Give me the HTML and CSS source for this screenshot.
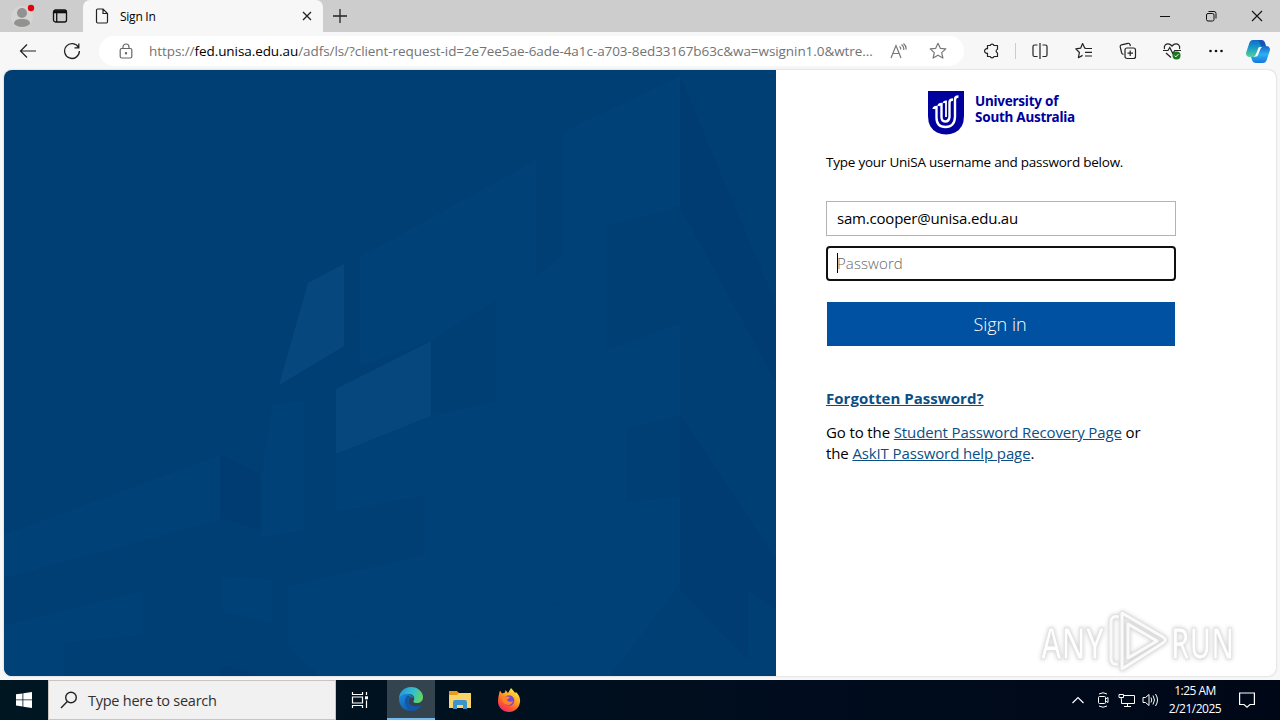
FILE: index.html
```html
<!DOCTYPE html>
<html lang="en">
<head>
  <meta charset="UTF-8">
  <title>Sign In</title>
  <link rel="stylesheet" href="styles.css">
</head>
<body>
  <div class="tabstrip">
    <svg class="profile" width="24" height="26" viewBox="0 0 24 26"><circle cx="11" cy="14" r="11" fill="#d6d4d2"/><circle cx="11" cy="10" r="5" fill="#929292"/><path d="M3 21c0-4 3-5 8-5s8 1 8 5c-2 2-5 3-8 3s-6-1-8-3z" fill="#929292"/><circle cx="20" cy="5" r="3.2" fill="#e3000f"/></svg>
    <svg class="tab-actions" width="16" height="16" viewBox="0 0 16 16" fill="none" stroke="#111" stroke-width="1.3"><rect x="1.5" y="2" width="13" height="12" rx="2"/><path d="M2 3.8h12" stroke-width="3"/><path d="M4.7 5v9"/></svg>
    <div class="tab">
      <svg width="14" height="16" viewBox="0 0 14 16" fill="none" stroke="#222" stroke-width="1.2"><path d="M1.5 2.2Q1.5 1 2.7 1H8l4.500 4.500v8.300q0 1.200-1.200 1.200H2.700q-1.200 0-1.200-1.200zM8 1v4.500h4.500"/></svg>
      <span class="tab-title">Sign In</span>
      <svg class="tab-close" width="10" height="10" viewBox="0 0 10 10" stroke="#222" stroke-width="1.3"><path d="M1 1l8 8M9 1L1 9"/></svg>
    </div>
    <svg class="new-tab" width="14" height="14" viewBox="0 0 14 14" stroke="#222" stroke-width="1.3"><path d="M7 0v14M0 7h14"/></svg>
    <div class="window-buttons">
      <svg width="12" height="12" viewBox="0 0 12 12" stroke="#111"><path d="M1 6.500h10"/></svg>
      <svg width="12" height="12" viewBox="0 0 12 12" fill="none" stroke="#111"><rect x="1.500" y="3.500" width="7.500" height="7.500" rx="1.500"/><path d="M3.500 1.500H9q2 0 2 2v5"/></svg>
      <svg width="12" height="12" viewBox="0 0 12 12" stroke="#111" stroke-width="1.100"><path d="M1 1l10 10M11 1L1 11"/></svg>
    </div>
  </div>

  <div class="toolbar">
    <svg class="back" width="18" height="16" viewBox="0 0 18 16" fill="none" stroke="#222" stroke-width="1.200"><path d="M17 8H1.500M8 1.500L1.500 8 8 14.500"/></svg>
    <svg class="reload" width="18" height="18" viewBox="0 0 18 18" fill="none" stroke="#222" stroke-width="1.300"><path d="M15.500 5.500A7.400 7.400 0 1 0 16.400 9M15.800 1.500v4.300h-4.300"/></svg>
    <div class="address">
      <svg width="14" height="16" viewBox="0 0 14 16" fill="none" stroke="#666" stroke-width="1.200"><rect x="1.200" y="5.500" width="11.600" height="9.500" rx="1.500"/><path d="M4 5.500V4a3 3 0 0 1 6 0v1.500"/><circle cx="7" cy="10.200" r=".6" fill="#666"/></svg>
      <span class="url">https://<b>fed.unisa.edu.au</b>/adfs/ls/?client-request-id=2e7ee5ae-6ade-4a1c-a703-8ed33167b63c&amp;wa=wsignin1.0&amp;wtre...</span>
      <svg class="read" width="17" height="16" viewBox="0 0 17 16" fill="none" stroke="#777" stroke-width="1.200"><path d="M1 15L6 2.500 11 15M2.800 10.500h6.400M9.500 3.500q1.500 1 1.200 3M11.500 1.500q2.800 2 2.200 5.500M13.500.5q3 2.500 2.500 6"/></svg>
      <svg class="fav" width="18" height="18" viewBox="0 0 18 18" fill="none" stroke="#777" stroke-width="1.200" stroke-linejoin="round"><path d="M9 1.300l2.300 5 5.500.6-4.100 3.700 1.200 5.500L9 13.300l-4.900 2.800 1.200-5.500L1.200 6.900l5.500-.6z"/></svg>
    </div>
    <svg class="ext" width="18" height="18" viewBox="0 0 18 18" fill="none" stroke="#222" stroke-width="1.200" stroke-linejoin="round"><path d="M4.500 3.500h2.700a2 2 0 0 1 3.800 0h3.500v3.700a2 2 0 0 0 0 3.800v3.500H11a2 2 0 0 1-3.800 0H4.500v-3.300a2.300 2.300 0 1 1 0-4.400z"/></svg>
    <span class="separator"></span>
    <svg class="split" width="18" height="18" viewBox="0 0 18 18" fill="none" stroke="#222" stroke-width="1.200"><path d="M9 1v16M6.500 3h-3Q2 3 2 4.500v8.500q0 1.500 1.500 1.500h3M11.500 3h3Q16 3 16 4.500v8.500q0 1.500-1.500 1.500h-3"/></svg>
    <svg width="18" height="18" viewBox="0 0 18 18" fill="none" stroke="#222" stroke-width="1.200" stroke-linejoin="round"><path d="M11 6.300l-1.200-.1L7.600 1.500l-2 4.700-4.800.7 3.600 3.600-1 5.200 4.200-2.300M11 6.500h6M10 10.300h7M10 14h7"/></svg>
    <svg width="18" height="18" viewBox="0 0 18 18" fill="none" stroke="#222" stroke-width="1.200"><rect x="6" y="6" width="10.500" height="10.500" rx="2"/><path d="M11.200 8.500v5.500M8.500 11.200H14M4.500 12.500Q3 12 2.700 11L1.200 4.800q-.3-1.500 1.200-2L9 1.300q1.500-.3 2 1.200l.4 1.500"/></svg>
    <svg width="18" height="18" viewBox="0 0 18 18" fill="none" stroke="#222" stroke-width="1.200"><path d="M1.500 7C.5 3.500 3 1.800 5 1.800c2 0 3 1 4 2.200 1-1.200 2-2.200 4-2.200s4.500 1.700 3.500 5.200M0 8.500h5l1.800-3 3 6 2-3H18M3 11l5 4.500"/><circle cx="13.500" cy="13.500" r="4" fill="#16791c" stroke="none"/><path d="M11.500 13.600l1.300 1.300 2.700-2.800" stroke="#fff" stroke-width="1"/></svg>
    <svg width="18" height="18" viewBox="0 0 18 18" fill="#111"><circle cx="3.500" cy="9" r="1.300"/><circle cx="9" cy="9" r="1.300"/><circle cx="14.500" cy="9" r="1.300"/></svg>
    <svg class="copilot" width="24" height="23" viewBox="0 0 24 23">
      <defs>
        <linearGradient id="cpA" x1="0" y1="0" x2="0" y2="1"><stop offset="0" stop-color="#1269cf"/><stop offset=".45" stop-color="#179bc5"/><stop offset="1" stop-color="#53d19c"/></linearGradient>
        <linearGradient id="cpB" x1="0" y1="0" x2="0" y2="1"><stop offset="0" stop-color="#1b5fd0"/><stop offset=".5" stop-color="#2bb1f3"/><stop offset="1" stop-color="#1577de"/></linearGradient>
      </defs>
      <path d="M18 6h2q4 0 4 4l-3 9q-1 4-4 4h-7q-3 0-4-3l-1-3h3q2 0 3-3l2-5q1-3 5-3z" fill="url(#cpB)"/>
      <path d="M7 0h8q3 0 4 3l1 4h-4q-2 0-3 3l-2 5q-1 2-4 2H4q-4 0-4-4l3-9Q4 0 7 0z" fill="url(#cpA)"/>
      <path d="M13.500 7H16q-1.500 1-2 3l-2 5q-.6 1.500-2 1.500H8q1.500-1 2-2.500l2-5q.5-2 1.500-2z" fill="#fff"/>
      <path d="M15 0q3 0 4 3l1 3.500h-4q-1.500-.5-2-3Q13.500 1 12 0z" fill="#1b50b8"/>
    </svg>
  </div>

  <div class="page">
    <svg class="illustration" width="772" height="606" viewBox="4 0 772 606">
      <rect x="4" width="772" height="606" fill="#003f74"/>
      <path fill="#004178" d="M360 187L536 90V206L563 185V62L680 6V136L607 156V280L680 253V345L627 358V432L680 427V514L288 577V516L425 485V425L336 442V384L431 346 496 331V230L431 271 360 296z"/>
      <path fill="#004178" d="M4 465L220 385V450L4 508zM4 555L143 521V565L64 573V606H4zM272 335L304 330V460L262 468V405zM223 506L272 510V553L223 542zM288 577L680 514 610 606H320z"/>
      <path fill="#003c71" d="M680 6L776 235V312L680 137zM680 345L776 490V540L748 520V590L680 520zM220 384L260 404V460L220 448zM220 595L262 606H220z"/>
      <path fill="#06487e" d="M308 213L344 194V276L279 315zM336 319L431 271V346L336 384z"/>
    </svg>
    <div class="login">
      <div class="logo">
        <svg width="36" height="44" viewBox="0 0 36 44"><path d="M0 0h36v25q0 12-9 16.500-9 4-18 0Q0 37 0 25z" fill="#00009c"/><g fill="none" stroke="#fff" stroke-width="2.400"><path d="M5.500 18q.5-2 3-2v10.500q0 9.500 9 9.500t9.500-10V8.500Q27 5.500 30.500 5.500"/><path d="M10.500 15q.5-2 3-2v13q0 4.500 3.700 4.500t4.300-4.500V11.500q0-3 3.500-3"/><path d="M15.500 12q.5-1.500 2.500-1.500V26" stroke-width="1.800"/></g></svg>
        <div class="logo-text"><div>University of</div><div>South Australia</div></div>
      </div>
      <p class="intro">Type your UniSA username and password below.</p>
      <form>
        <input class="field" type="text" value="sam.cooper@unisa.edu.au">
        <div class="field focused"><span class="caret"></span><span class="placeholder">Password</span></div>
        <button class="submit" type="button">Sign in</button>
      </form>
      <a class="forgot" href="#">Forgotten Password?</a>
      <p class="help">Go to the <a href="#">Student Password Recovery Page</a> or<br>the <a href="#">AskIT Password help page</a>.</p>
    </div>
    <svg class="watermark" width="206" height="66" viewBox="0 0 206 66">
      <g fill="#fff" stroke="#e2e2e2" stroke-width="1">
        <text x="3" y="51" textLength="63" lengthAdjust="spacingAndGlyphs">ANY</text>
        <text x="133" y="51" textLength="63" lengthAdjust="spacingAndGlyphs">RUN</text>
      </g>
      <g fill="none" stroke-linejoin="round">
        <path d="M81 9q-8-2-8 5v37q0 6 7 5M84 5l41 24q5 3 0 6L84 61V5zM90 16v34l29-17z" stroke="#dedede" stroke-width="4.500"/>
        <path d="M81 9q-8-2-8 5v37q0 6 7 5M84 5l41 24q5 3 0 6L84 61V5zM90 16v34l29-17z" stroke="#fafafa" stroke-width="3"/>
      </g>
    </svg>
  </div>

  <div class="taskbar">
    <div class="start"><svg width="16" height="16" viewBox="0 0 16 16" fill="#fff"><path d="M0 2.300l6.500-.9v6.100H0zM7.300 1.300L16 0v7.500H7.300zM0 8.300h6.500v6.100L0 13.500zM7.300 8.300H16V16l-8.700-1.300z"/></svg></div>
    <div class="search">
      <svg width="18" height="18" viewBox="0 0 18 18" fill="none" stroke="#222" stroke-width="1.400"><circle cx="11" cy="6.500" r="5.300"/><path d="M7.300 10.500L1 17"/></svg>
      <span>Type here to search</span>
    </div>
    <div class="task"><svg width="18" height="16" viewBox="0 0 18 16" fill="none" stroke="#fff" stroke-width="1.200"><path d="M1.500 0v2.500h10V0M1.500 16v-2.500h10V16M1.500 5h10v6h-10zM15.500 0v3M15.500 8.500V16"/><path d="M14 4.300h3v3h-3z" fill="#fff" stroke="none"/></svg></div>
    <div class="task active">
      <svg width="24" height="24" viewBox="0 0 24 24">
        <defs>
          <linearGradient id="edgeTop" x1="0" y1=".3" x2="1" y2=".6"><stop offset="0" stop-color="#2497dc"/><stop offset=".55" stop-color="#35c0cc"/><stop offset="1" stop-color="#65d65c"/></linearGradient>
          <linearGradient id="edgeLow" x1="0" y1="0" x2="1" y2="1"><stop offset="0" stop-color="#1b8de0"/><stop offset="1" stop-color="#0d4a94"/></linearGradient>
        </defs>
        <path d="M0 12C0 5 5 0 12 0s12 5 12 10c0 4-3 6-6 6-4 0-4-1.500-3-3 1-3-1-6-5-6C5 7 1 9 0 12z" fill="url(#edgeTop)"/>
        <path d="M0 12c1-4 5-5.500 9-5 3 .3 5 2 5.500 4-2-1.500-5 0-5 3.500 0 4 4 6.500 8 5.500 2-.4 4-1.500 5-2.300C20 22 16 24 12 24 5 24 0 19 0 12z" fill="url(#edgeLow)"/>
        <path d="M8 9c-4 4-2 12 4 15 4 0 8-2 10.500-6.300-5 3.300-12 1.300-13-3.200C9 12 10.500 11 12 10.500 11 9 9.500 8.500 8 9z" fill="#1556a5"/>
      </svg>
    </div>
    <div class="task"><svg width="22" height="20" viewBox="0 0 22 20"><path d="M0 1h8l2 2h11v5H0z" fill="#e89c1b"/><path d="M0 5h8l2-2h12v15H0z" fill="#fbd468"/><path d="M4 19v-7q0-2 2-2h10q2 0 2 2v7h-4v-4H8v4z" fill="#3c93d0"/></svg></div>
    <div class="task">
      <svg width="24" height="24" viewBox="0 0 24 24">
        <defs><linearGradient id="fox" x1=".8" y1="0" x2=".2" y2="1"><stop offset="0" stop-color="#fff44f"/><stop offset=".4" stop-color="#ffa51e"/><stop offset=".7" stop-color="#ff5735"/><stop offset="1" stop-color="#f0206a"/></linearGradient></defs>
        <path d="M3 2.500l2 3 3-1 .5-2.500L11 5l3-5c2 2 3 3.500 4 5l1-1c3 3 4.500 6 4 10-.6 5.500-5 10-11 10S1 19.500 1 13.500C1 9 2 6 3 2.500z" fill="url(#fox)"/>
        <circle cx="12" cy="12.500" r="5.300" fill="#7a45d8"/><path d="M5 9c3-2 5 0 8 0-1 2-3 2-3 3 1 2 4 2 6 1-1 4-5 5-8 3s-3-5-3-7z" fill="#ff8427"/>
      </svg>
    </div>
    <div class="tray">
      <svg class="chevron" width="12" height="12" viewBox="0 0 12 12" fill="none" stroke="#fff" stroke-width="1.200"><path d="M.5 9L6 3.500 11.500 9"/></svg>
      <svg class="camera" width="12" height="16" viewBox="0 0 12 16" fill="none" stroke="#fff"><rect x="1.500" y="4.500" width="7" height="7" rx="1"/><path d="M8.500 7l2.500-1.500v5L8.500 9M2 2q4-2.500 8 0M2 14q4 2.500 8 0"/></svg>
      <svg class="network" width="17" height="16" viewBox="0 0 17 16" fill="none" stroke="#fff"><path d="M6 3.500h10.500v8H3.500V8M9.500 11.500v3M6 14.500h7"/><path d="M1 2.500h4.500v3H1zM3.300 5.500V8"/></svg>
      <svg class="sound" width="17" height="16" viewBox="0 0 17 16" fill="none" stroke="#fff"><path d="M1 5.500h2.500L7 2.500v11l-3.500-3H1zM9 5.500q1.500 2.500 0 5M11 3.500q3 4.500 0 9M13.500 2q4 6 0 12"/></svg>
      <div class="clock">1:25 AM<br>2/21/2025</div>
      <svg class="notice" width="16" height="16" viewBox="0 0 16 16" fill="none" stroke="#fff" stroke-width="1.200"><path d="M.6 1h14.800v11.500H11L8 15.200 5 12.500H.6z"/></svg>
    </div>
  </div>
</body>
</html>
```
FILE: styles.css
```css
* { box-sizing: border-box; }
body {
  margin: 0;
  width: 1280px;
  height: 720px;
  overflow: hidden;
  background: #f7f7f7;
  font-family: "Open Sans", "Noto Sans", sans-serif;
  color: #000;
}
svg { display: block; flex: none; }

.tabstrip { display: flex; align-items: center; height: 32px; background: #cdcdcd; }
.profile { margin-left: 11px; }
.tab-actions { margin: 0 15px 0 17px; }
.tab {
  display: flex;
  align-items: center;
  width: 240px;
  height: 32px;
  padding: 0 11px 0 12px;
  background: #f7f7f7;
  border-radius: 7px 7px 0 0;
}
.tab-title { margin-left: 11px; font-size: 12px; letter-spacing: -0.25px; }
.tab-close { margin-left: auto; }
.new-tab { margin-left: 10px; }
.window-buttons { display: flex; gap: 34px; margin-left: auto; padding-right: 17px; }

.toolbar { display: flex; align-items: center; height: 38px; background: #f7f7f7; }
.back { margin-left: 19px; }
.reload { margin: 0 18px 0 26px; }
.address {
  display: flex;
  align-items: center;
  width: 865px;
  height: 30px;
  padding: 0 17px 0 20px;
  background: #fff;
  border-radius: 15px;
}
.url {
  width: 726px;
  margin-left: 16px;
  white-space: nowrap;
  font-size: 13.5px;
  letter-spacing: -0.07px;
  color: #737373;
}
.url b { font-weight: 400; color: #000; }
.read { margin-left: 15px; }
.fav { margin-left: auto; }
.ext { margin-left: 19px; }
.separator { width: 1px; height: 16px; margin: 0 15px 0 14px; background: #ccc; }
.toolbar > .split ~ svg { margin-left: 26px; }
.toolbar > svg.copilot { margin-left: 21px; }

.page {
  position: relative;
  display: flex;
  width: 1272px;
  height: 606px;
  margin: 0 4px 4px;
  overflow: hidden;
  background: #fff;
  border-radius: 8px;
  box-shadow: 0 0 2px #bbb;
}
.login { width: 350px; margin-left: 50px; }
.logo { display: flex; height: 44px; margin: 21px 0 0 102px; }
.logo-text {
  margin-left: 11px;
  padding-top: 2px;
  font: 700 13.5px/16px "Noto Sans", sans-serif;
  letter-spacing: -0.25px;
  white-space: nowrap;
  color: #00009c;
}
.intro {
  margin: 17px 0 29px;
  font-size: 13.5px;
  line-height: 20px;
  letter-spacing: -0.23px;
  white-space: nowrap;
}
.field {
  display: flex;
  align-items: center;
  width: 350px;
  height: 35px;
  padding: 0 10px 2px;
  border: 1px solid #b3b3b3;
  font-family: inherit;
  font-size: 15px;
  letter-spacing: -0.2px;
  color: #000;
}
.focused { margin-top: 10px; padding: 0 9px 1px; border: 2px solid #101010; border-radius: 4px; }
.caret { width: 1px; height: 20px; margin-right: -1px; background: #000; }
.placeholder { color: #666; font-weight: 300; letter-spacing: 0.1px; }
.submit {
  display: block;
  width: 348px;
  height: 44px;
  margin: 21px 1px 0;
  padding: 0 2px 0 0;
  border: 0;
  background: #0051a1;
  color: #fff;
  font: 300 18px "Open Sans", sans-serif;
}
a { color: #0b4f85; }
.forgot {
  display: block;
  margin-top: 42px;
  font-size: 15px;
  font-weight: 700;
  line-height: 21px;
  letter-spacing: 0.05px;
}
.help {
  margin: 13px 0 0;
  font-size: 15px;
  line-height: 21px;
  letter-spacing: -0.12px;
  white-space: nowrap;
}

/* stamp over the lower right corner */
.watermark {
  position: absolute;
  right: 32px;
  bottom: 2px;
  filter: drop-shadow(0 0 2px #ccc);
  font: 600 43px "Open Sans", sans-serif;
}

.taskbar {
  display: flex;
  height: 40px;
  background: linear-gradient(90deg, #001722, #000d1e 60%, #000818);
}
.start, .task { display: flex; align-items: center; justify-content: center; width: 48px; }
.task { width: 49px; }
.search {
  display: flex;
  align-items: center;
  width: 288px;
  padding: 0 11px;
  background: #f1f1f1;
  border: 1px solid #c9c4c0;
  font-size: 14.5px;
  letter-spacing: -0.25px;
  color: #303030;
}
.search span { margin-left: 10px; }
.search + .task { width: 51px; padding-right: 4px; }
.active { width: 48px; background: #33444e; border-bottom: 2px solid #76b9ed; }
.tray { display: flex; align-items: center; margin-left: auto; color: #fff; }
.camera { margin-left: 13px; }
.network { margin-left: 9px; }
.sound { margin-left: 7px; }
.clock {
  width: 66px;
  margin-left: 3px;
  text-align: center;
  font-size: 12px;
  line-height: 18px;
  letter-spacing: -0.5px;
}
.notice { margin: 0 20px 0 11px; box-sizing: content-box; padding-right: 4px; border-right: 0; }
.tray { padding-right: 1px; }
```
